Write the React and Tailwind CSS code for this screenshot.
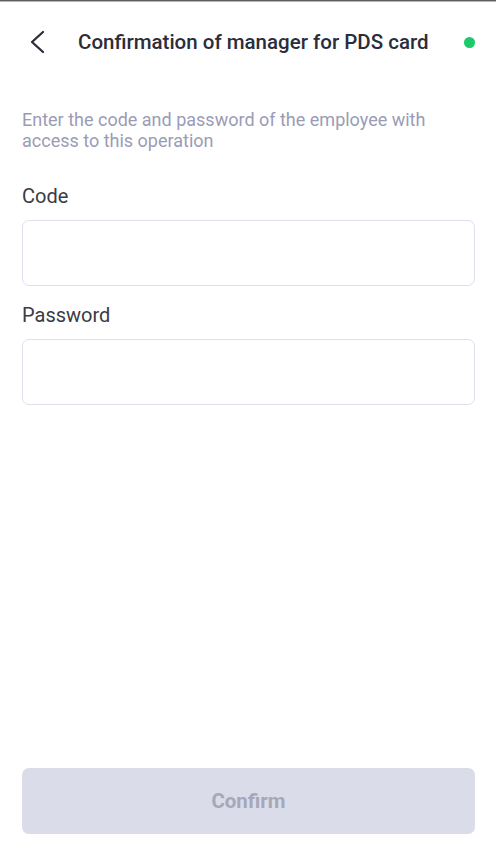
import { useState } from 'react';

function Field({ label, type, value, onChange }) {
  return (
    <div>
      <label className="block text-[20px] leading-[24px] text-[#3a3b45]">{label}</label>
      <input
        type={type}
        value={value}
        onChange={(e) => onChange(e.target.value)}
        className="mt-3 block h-[66px] w-full rounded-[7px] border border-[#dfdfee] bg-white px-4 text-[18px] outline-none"
      />
    </div>
  );
}

export default function App() {
  const [code, setCode] = useState('');
  const [password, setPassword] = useState('');
  const ready = code && password;

  return (
    <div
      className="flex min-h-screen flex-col bg-white"
      style={{ fontFamily: 'Roboto, "Noto Sans", sans-serif' }}
    >
      <div className="h-px bg-[#5f5f5f]" />
      <div className="h-px bg-[#b5b5b5]" />

      <header className="flex h-[80px] items-center pl-[29px] pr-[21px]">
        <button className="flex h-[24px] w-[18px] items-center text-[#2b2d3a]">
          <svg width="18" height="24" viewBox="0 0 18 24" fill="none">
            <path d="M14 2 L3 12 L14 22" stroke="currentColor" strokeWidth="2.3" strokeLinecap="round" strokeLinejoin="round" />
          </svg>
        </button>
        <h1 className="ml-[31px] flex-1 text-[20.5px] font-medium text-[#2b2d3a]">
          Confirmation of manager for PDS card
        </h1>
        <span className="h-[11px] w-[11px] rounded-full bg-[#1dc96b]" />
      </header>

      <main className="flex flex-1 flex-col pl-[22px] pr-[21px]">
        <p className="mt-[27px] text-[18px] leading-[21px] text-[#9a9cb6]">
          Enter the code and password of the employee with
          <br />
          access to this operation
        </p>

        <div className="mt-[33px]">
          <Field label="Code" type="text" value={code} onChange={setCode} />
        </div>
        <div className="mt-[17px]">
          <Field label="Password" type="password" value={password} onChange={setPassword} />
        </div>

        <button
          disabled={!ready}
          className={`mt-auto mb-[21px] h-[66px] w-full rounded-[7px] text-[20.5px] font-bold ${
            ready ? 'bg-[#5b5ce2] text-white' : 'bg-[#dbdce9] text-[#a6a7b9]'
          }`}
        >
          Confirm
        </button>
      </main>
    </div>
  );
}
